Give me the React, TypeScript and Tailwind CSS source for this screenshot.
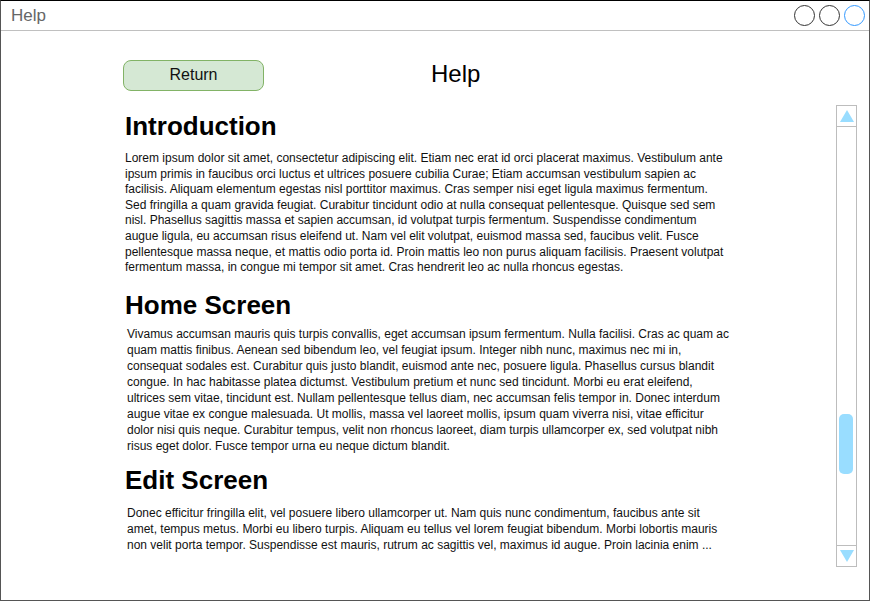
import React from 'react'

const sections = [
  {
    title: 'Introduction',
    lines: [
      'Lorem ipsum dolor sit amet, consectetur adipiscing elit. Etiam nec erat id orci placerat maximus. Vestibulum ante',
      'ipsum primis in faucibus orci luctus et ultrices posuere cubilia Curae; Etiam accumsan vestibulum sapien ac',
      'facilisis. Aliquam elementum egestas nisl porttitor maximus. Cras semper nisi eget ligula maximus fermentum.',
      'Sed fringilla a quam gravida feugiat. Curabitur tincidunt odio at nulla consequat pellentesque. Quisque sed sem',
      'nisl. Phasellus sagittis massa et sapien accumsan, id volutpat turpis fermentum. Suspendisse condimentum',
      'augue ligula, eu accumsan risus eleifend ut. Nam vel elit volutpat, euismod massa sed, faucibus velit. Fusce',
      'pellentesque massa neque, et mattis odio porta id. Proin mattis leo non purus aliquam facilisis. Praesent volutpat',
      'fermentum massa, in congue mi tempor sit amet. Cras hendrerit leo ac nulla rhoncus egestas.',
    ],
  },
  {
    title: 'Home Screen',
    lines: [
      'Vivamus accumsan mauris quis turpis convallis, eget accumsan ipsum fermentum. Nulla facilisi. Cras ac quam ac',
      'quam mattis finibus. Aenean sed bibendum leo, vel feugiat ipsum. Integer nibh nunc, maximus nec mi in,',
      'consequat sodales est. Curabitur quis justo blandit, euismod ante nec, posuere ligula. Phasellus cursus blandit',
      'congue. In hac habitasse platea dictumst. Vestibulum pretium et nunc sed tincidunt. Morbi eu erat eleifend,',
      'ultrices sem vitae, tincidunt est. Nullam pellentesque tellus diam, nec accumsan felis tempor in. Donec interdum',
      'augue vitae ex congue malesuada. Ut mollis, massa vel laoreet mollis, ipsum quam viverra nisi, vitae efficitur',
      'dolor nisi quis neque. Curabitur tempus, velit non rhoncus laoreet, diam turpis ullamcorper ex, sed volutpat nibh',
      'risus eget dolor. Fusce tempor urna eu neque dictum blandit.',
    ],
  },
  {
    title: 'Edit Screen',
    lines: [
      'Donec efficitur fringilla elit, vel posuere libero ullamcorper ut. Nam quis nunc condimentum, faucibus ante sit',
      'amet, tempus metus. Morbi eu libero turpis. Aliquam eu tellus vel lorem feugiat bibendum. Morbi lobortis mauris',
      'non velit porta tempor. Suspendisse est mauris, rutrum ac sagittis vel, maximus id augue. Proin lacinia enim ...',
    ],
  },
]

// spacing tuned per section: heading gap, text gap, line height
const headingGap = ['mt-[20px]', 'mt-[14px]', 'mt-[11px]']
const textGap = ['mt-[10px] leading-[15.6px] pl-[2px]', 'mt-[6px] leading-[16px] pl-[4px]', 'mt-[10px] leading-[16px] pl-[4px]']

function WindowButtons() {
  return (
    <div className="flex gap-[4px] pr-[4px]">
      <div className="w-[21px] h-[21px] rounded-full border border-[#333]" />
      <div className="w-[21px] h-[21px] rounded-full border border-[#333]" />
      <div className="w-[21px] h-[21px] rounded-full border border-[#3399ff]" />
    </div>
  )
}

function Scrollbar() {
  return (
    <div className="w-[21px] h-[462px] mt-[74px] border border-[#bdbdbd] flex flex-col">
      <div className="h-[21px] border-b border-[#bdbdbd] flex items-center justify-center">
        <svg width="14" height="12" viewBox="0 0 14 12">
          <path d="M7 0 L14 12 L0 12 Z" fill="#99ddff" />
        </svg>
      </div>
      <div className="flex-1 relative">
        <div className="absolute left-[2px] top-[287px] w-[14px] h-[60px] rounded-[5px] bg-[#99ddff]" />
      </div>
      <div className="h-[21px] border-t border-[#bdbdbd] flex items-center justify-center">
        <svg width="14" height="12" viewBox="0 0 14 12">
          <path d="M0 0 L14 0 L7 12 Z" fill="#99ddff" />
        </svg>
      </div>
    </div>
  )
}

export default function App() {
  return (
    <div
      className="w-[870px] h-[601px] bg-white border border-[#555] border-t-black flex flex-col overflow-hidden"
      style={{ fontFamily: '"Liberation Sans", Arial, sans-serif' }}
    >
      {/* title bar */}
      <div className="h-[30px] shrink-0 border-b border-[#c0c0c0] flex items-center justify-between">
        <span className="pl-[10px] pt-[1px] text-[17px] text-[#666]">Help</span>
        <WindowButtons />
      </div>

      <div className="flex-1 flex">
        <div className="pl-[122px] w-[835px]">
          <div className="flex items-center mt-[29px]">
            <button className="w-[141px] h-[31px] pb-[1px] rounded-[8px] bg-[#d5e8d4] border border-[#82b366] text-[16px] text-[#111]">
              Return
            </button>
            <h1 className="ml-[167px] mb-[4px] text-[24px] text-black leading-[24px]">Help</h1>
          </div>

          {sections.map((s, i) => (
            <section key={s.title} className={headingGap[i]}>
              <h2 className="pl-[2px] text-[26px] font-bold leading-[30px] text-black">{s.title}</h2>
              <div className={'text-[12px] text-[#111] whitespace-nowrap ' + textGap[i]}>
                {s.lines.map((l) => (
                  <div key={l}>{l}</div>
                ))}
              </div>
            </section>
          ))}
        </div>
        <Scrollbar />
      </div>
    </div>
  )
}
